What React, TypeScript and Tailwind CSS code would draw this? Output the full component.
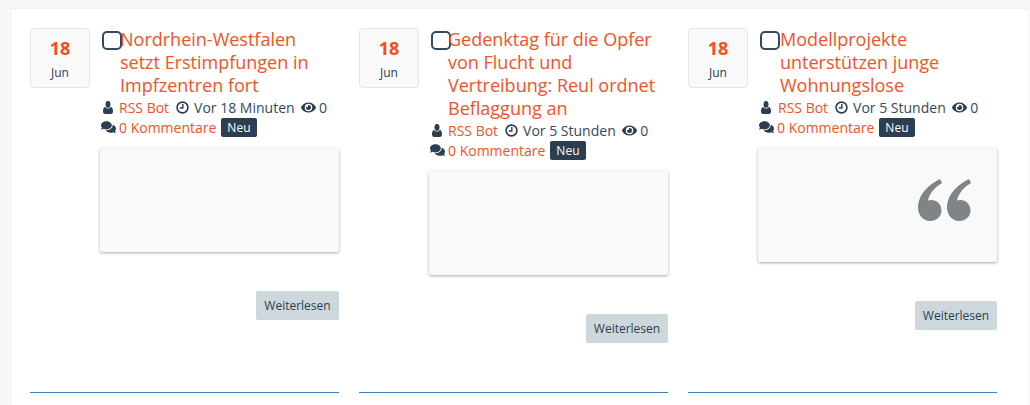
import { FaEye, FaComments } from 'react-icons/fa'

interface Post {
  title: string[]
  titleOffset: string
  metaGap: string
  time: string
  imageHeight: string
  buttonWidth: string
  quote?: boolean
}

const posts: Post[] = [
  {
    title: ['Nordrhein-Westfalen', 'setzt Erstimpfungen in', 'Impfzentren fort'],
    titleOffset: '-ml-[2px]',
    metaGap: 'ml-[6px]',
    time: 'Vor 18 Minuten',
    imageHeight: 'h-[104px]',
    buttonWidth: 'w-[83px]',
  },
  {
    title: ['Gedenktag für die Opfer', 'von Flucht und', 'Vertreibung: Reul ordnet', 'Beflaggung an'],
    titleOffset: '-ml-[3px]',
    metaGap: 'ml-[6px]',
    time: 'Vor 5 Stunden',
    imageHeight: 'h-[104px]',
    buttonWidth: 'w-[82px]',
  },
  {
    title: ['Modellprojekte', 'unterstützen junge', 'Wohnungslose'],
    titleOffset: 'ml-0',
    metaGap: 'ml-[7px]',
    time: 'Vor 5 Stunden',
    imageHeight: 'h-[114px]',
    buttonWidth: 'w-[82px]',
    quote: true,
  },
]

// font awesome 4 look, the packaged v5 icons are too thin here
function UserIcon() {
  return (
    <svg viewBox="0 0 12 13" preserveAspectRatio="none" className="h-[13px] w-[10px] shrink-0 fill-[#2c3e50]">
      <ellipse cx="6" cy="3.4" rx="3" ry="3.400" />
      <path d="M2.700 5.900C3.500 7 4.600 7.500 6 7.500s2.500-.5 3.300-1.600C11 6.100 12 7.400 12 10.200 12 12 11 13 9.600 13H2.400C1 13 0 12 0 10.200 0 7.400 1 6.100 2.700 5.900z" />
    </svg>
  )
}

function ClockIcon() {
  return (
    <svg viewBox="0 0 12 12" className="h-[13px] w-[13px] shrink-0 fill-none stroke-[#2c3e50]">
      <circle cx="6" cy="6" r="5" strokeWidth="1.500" />
      <path d="M6.300 2.800V6.500H3.500" strokeWidth="1.300" />
    </svg>
  )
}

function PostCard({ post }: { post: Post }) {
  return (
    <div className="flex h-[365px] gap-[10px] border-b border-[#3f7fb8]">
      <div className="flex h-[60px] w-[60px] shrink-0 flex-col items-center rounded border border-[#e6e6e6] bg-[#f9f9f9]">
        <span className="mt-[6px] text-[18px] leading-[26px] font-bold text-[#ef5022]">18</span>
        <span className="mt-[4px] text-[12px] leading-[16px] text-[#2c3e50]">Jun</span>
      </div>

      <div className="flex min-w-0 flex-1 flex-col">
        <div className="flex">
          <div className="mt-[3px] ml-[2px] h-[19px] w-[20px] shrink-0 rounded-[5px] border-2 border-[#34495e] bg-white" />
          <h3 className={`text-[18px] leading-[23px] font-normal whitespace-nowrap text-[#ef5428] ${post.titleOffset}`}>
            {post.title.map((line) => (
              <div key={line}>{line}</div>
            ))}
          </h3>
        </div>

        <div className="flex h-[20px] items-center pl-[3px] text-[14px] text-[#34495e]">
          <UserIcon />
          <span className={`text-[#ef5428] ${post.metaGap}`}>RSS Bot</span>
          <span className="ml-[7px]">
            <ClockIcon />
          </span>
          <span className="ml-[5px]">{post.time}</span>
          <FaEye className="ml-[6px] h-[15px] w-[15px] shrink-0 text-[#2c3e50]" />
          <span className="ml-[3.5px]">0</span>
        </div>
        <div className="flex h-[20px] items-center text-[14px] text-[#34495e]">
          <FaComments className="ml-[1px] h-[14px] w-[15px] shrink-0 text-[#2c3e50]" />
          <span className="ml-[3px] text-[#ef5428]">0 Kommentare</span>
          <span className="ml-[5px] rounded-[2px] bg-[#2c3e50] px-[6px] text-[12px] leading-[19px] font-medium text-white">
            Neu
          </span>
        </div>

        <div
          className={`mt-[11px] flex items-start justify-end rounded-[2px] bg-[#f9f9f9] shadow-[0_1px_3px_rgba(0,0,0,0.35)] ${post.imageHeight}`}
        >
          {post.quote && (
            <svg viewBox="0 0 54 42" className="mt-[31px] mr-[25px] h-[42px] w-[54px] fill-[#7f8486]">
              <path d="M22 0C12 5 1 14 0 27c-.5 8 4.500 15 12 15 6.500 0 11.500-4.500 11.500-10.500S19 21 13.500 21c-1.500 0-3 .3-3.500 .6C11 15 17 8 24 4z" />
              <path d="M51 0C41 5 30 14 29 27c-.5 8 4.500 15 12 15 6.500 0 11.500-4.500 11.500-10.500S48 21 42.500 21c-1.500 0-3 .3-3.500 .6C40 15 46 8 53 4z" />
            </svg>
          )}
        </div>

        <div className="mt-[39px] flex justify-end">
          <button className={`h-[29px] rounded-[2px] bg-[#ced7dc] text-center text-[12px] text-[#2c3e50] ${post.buttonWidth}`}>
            Weiterlesen
          </button>
        </div>
      </div>
    </div>
  )
}

export default function App() {
  return (
    <div className="h-[405px] w-[1030px] overflow-hidden bg-[#f8f8f8] pt-[8px] pr-[2px] pl-[10px] font-['Open_Sans',sans-serif]">
      <div className="h-[397px] rounded-t-[2px] border-t border-l border-[#efefef] bg-white pt-[19px] pr-[31px] pl-[19px]">
        <div className="grid grid-cols-3 gap-[20px]">
          {posts.map((post) => (
            <PostCard key={post.title[0]} post={post} />
          ))}
        </div>
      </div>
    </div>
  )
}
